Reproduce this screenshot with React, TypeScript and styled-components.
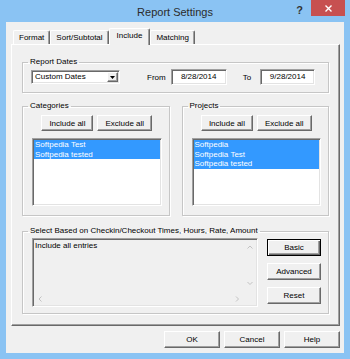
import React from 'react';
import styled, { createGlobalStyle, css } from 'styled-components';

const GlobalStyle = createGlobalStyle`
  html, body {
    margin: 0;
    padding: 0;
    background: #8ac3f3;
  }
  body {
    font-family: 'Liberation Sans', Arial, sans-serif;
  }
  * {
    box-sizing: border-box;
  }
`;

const raised = css`
  border: 1px solid;
  border-color: #ffffff #696969 #696969 #ffffff;
  box-shadow: inset -1px -1px 0 #a0a0a0;
`;

const sunken = css`
  border: 1px solid;
  border-color: #a0a0a0 #ffffff #ffffff #a0a0a0;
  box-shadow: inset 1px 1px 0 #696969, inset -1px -1px 0 #e3e3e3;
`;

const Window = styled.div`
  width: 350px;
  height: 359px;
  background: #8ac3f3;
  display: flex;
  flex-direction: column;
`;

const TitleBar = styled.div`
  height: 22px;
  display: grid;
  grid-template-columns: 1fr auto 1fr;
  align-items: start;
`;

const Title = styled.div`
  grid-column: 2;
  font-size: 11px;
  line-height: 22px;
  padding-top: 1px;
  color: #2b2b2b;
`;

const Controls = styled.div`
  grid-column: 3;
  justify-self: end;
  display: flex;
  align-items: flex-start;
`;

const HelpGlyph = styled.span`
  font-size: 11px;
  font-weight: bold;
  line-height: 20px;
  color: #333;
  margin-right: 8px;
`;

const CloseButton = styled.div`
  width: 34px;
  height: 16px;
  margin-right: 5px;
  background: #c75050;
  display: flex;
  align-items: center;
  justify-content: center;
`;

const Client = styled.div`
  flex: 1;
  margin: 0 6px 6px;
  background: #f0f0f0;
  padding: 6px 4px 5px 5px;
  display: flex;
  flex-direction: column;
  font-size: 8px;
  color: #000;
`;

const TabStrip = styled.div`
  display: flex;
  align-items: flex-end;
  height: 16px;
  padding-left: 2px;
`;

const Tab = styled.div<{ $active?: boolean }>`
  height: ${(p) => (p.$active ? 17 : 14)}px;
  margin-bottom: ${(p) => (p.$active ? -1 : 0)}px;
  padding: 0 ${(p) => (p.$active ? 7 : 5)}px;
  border: 1px solid;
  border-color: #ffffff #696969 transparent #ffffff;
  border-bottom: none;
  border-radius: 2px 2px 0 0;
  box-shadow: inset -1px 0 0 #a0a0a0;
  background: #f0f0f0;
  line-height: ${(p) => (p.$active ? 14 : 13)}px;
  white-space: nowrap;
  position: relative;
  z-index: ${(p) => (p.$active ? 1 : 0)};
`;

const TabPanel = styled.div`
  ${raised};
  background: #f0f0f0;
  padding: 12px 10px 11px;
  display: flex;
  flex-direction: column;
`;

const Group = styled.fieldset<{ $gap?: number }>`
  margin: ${(p) => p.$gap ?? 0}px 0 0;
  padding: 0;
  min-width: 0;
  border: 1px solid #c6c6c6;
  box-shadow: 1px 1px 0 #ffffff, inset 1px 1px 0 #ffffff;
`;

const Caption = styled.legend`
  margin-left: 5px;
  padding: 0 2px;
  font-size: 8px;
  line-height: 10px;
`;

const DatesRow = styled.div`
  display: flex;
  align-items: center;
  height: 16px;
  margin: 2px 8px 7px 8px;
`;

const Combo = styled.div`
  ${sunken};
  width: 89px;
  height: 14px;
  background: #fff;
  display: flex;
  padding: 1px;
`;

const ComboText = styled.div`
  flex: 1;
  padding-left: 2px;
  line-height: 10px;
`;

const DropButton = styled.div`
  ${raised};
  width: 11px;
  background: #f0f0f0;
  display: flex;
  align-items: center;
  justify-content: center;
`;

const FieldLabel = styled.span<{ $ml: number }>`
  margin-left: ${(p) => p.$ml}px;
`;

const DateBox = styled.div<{ $w: number; $ml: number }>`
  ${sunken};
  width: ${(p) => p.$w}px;
  height: 16px;
  margin-left: ${(p) => p.$ml}px;
  background: #fff;
  text-align: center;
  line-height: 14px;
`;

const Columns = styled.div`
  display: grid;
  grid-template-columns: 1fr 1fr;
  column-gap: 12px;
  margin-top: 8px;
`;

const GroupBody = styled.div`
  padding: 4px 7px 9px 9px;
`;

const ButtonRow = styled.div`
  display: flex;
  justify-content: center;
  gap: 4px;
`;

const PushButton = styled.button<{ $w?: number; $h?: number; $default?: boolean }>`
  ${raised};
  width: ${(p) => (p.$w ? `${p.$w}px` : 'auto')};
  height: ${(p) => p.$h ?? 16}px;
  padding: 0 ${(p) => (p.$w ? 0 : 7)}px;
  background: #f0f0f0;
  font: inherit;
  font-size: 8px;
  color: #000;
  cursor: default;
  ${(p) =>
    p.$default &&
    css`
      border: 1px solid #000;
      box-shadow: inset 1px 1px 0 #ffffff, inset -1px -1px 0 #696969,
        inset -2px -2px 0 #a0a0a0;
    `}
`;

const ListBox = styled.div`
  ${sunken};
  height: 68px;
  margin-top: 7px;
  background: #fff;
  padding: 1px;
`;

const ListItem = styled.div<{ $selected?: boolean }>`
  line-height: 9.5px;
  padding-left: 1px;
  white-space: nowrap;
  background: ${(p) => (p.$selected ? '#3399ff' : 'transparent')};
  color: ${(p) => (p.$selected ? '#fff' : '#000')};
`;

const CriteriaRow = styled.div`
  display: flex;
  margin: 2px 7px 6px 9px;
`;

const Criteria = styled.div`
  ${sunken};
  flex: 1;
  height: 69px;
  background: #f0f0f0;
  padding: 1px;
  display: grid;
  grid-template-columns: 1fr 12px;
  grid-template-rows: 1fr 12px;
`;

const CriteriaText = styled.div`
  padding: 1px 1px;
  line-height: 10px;
`;

const VScroll = styled.div`
  display: flex;
  flex-direction: column;
  justify-content: space-between;
  align-items: center;
  padding: 5px 0 7px;
`;

const HScroll = styled.div`
  display: flex;
  justify-content: space-between;
  align-items: center;
  padding: 0 4px 0 4px;
`;

const SideButtons = styled.div`
  display: flex;
  flex-direction: column;
  gap: 7px;
  margin-left: 9px;
  padding-top: 1px;
`;

const Footer = styled.div`
  display: flex;
  justify-content: flex-end;
  gap: 4px;
  margin-top: 5px;
`;

const Chevron: React.FC<{ dir: 'up' | 'down' | 'left' | 'right' }> = ({ dir }) => {
  const pts = {
    up: '0.5,3.5 3,1 5.5,3.5',
    down: '0.5,1 3,3.5 5.5,1',
    left: '3.5,0.5 1,3 3.5,5.5',
    right: '1,0.5 3.5,3 1,5.5',
  }[dir];
  const vertical = dir === 'up' || dir === 'down';
  return (
    <svg width={vertical ? 6 : 5} height={vertical ? 5 : 6}>
      <polyline points={pts} fill="none" stroke="#c2c2c2" strokeWidth="1" />
    </svg>
  );
};

const categories = ['Softpedia Test', 'Softpedia tested'];
const projects = ['Softpedia', 'Softpedia Test', 'Softpedia tested'];
const tabs = ['Format', 'Sort/Subtotal', 'Include', 'Matching'];

const PickList: React.FC<{ title: string; items: string[] }> = ({ title, items }) => (
  <Group>
    <Caption>{title}</Caption>
    <GroupBody>
      <ButtonRow>
        <PushButton>Include all</PushButton>
        <PushButton>Exclude all</PushButton>
      </ButtonRow>
      <ListBox>
        {items.map((item) => (
          <ListItem key={item} $selected>
            {item}
          </ListItem>
        ))}
      </ListBox>
    </GroupBody>
  </Group>
);

const App: React.FC = () => (
  <>
    <GlobalStyle />
    <Window>
      <TitleBar>
        <Title>Report Settings</Title>
        <Controls>
          <HelpGlyph>?</HelpGlyph>
          <CloseButton>
            <svg width="7" height="7">
              <path d="M0.5 0.5 L6.5 6.5 M6.5 0.5 L0.5 6.5" stroke="#fff" strokeWidth="1.4" />
            </svg>
          </CloseButton>
        </Controls>
      </TitleBar>
      <Client>
        <TabStrip>
          {tabs.map((t) => (
            <Tab key={t} $active={t === 'Include'}>
              {t}
            </Tab>
          ))}
        </TabStrip>
        <TabPanel>
          <Group>
            <Caption>Report Dates</Caption>
            <DatesRow>
              <Combo>
                <ComboText>Custom Dates</ComboText>
                <DropButton>
                  <svg width="5" height="3">
                    <polygon points="0,0 5,0 2.5,3" fill="#000" />
                  </svg>
                </DropButton>
              </Combo>
              <FieldLabel $ml={27}>From</FieldLabel>
              <DateBox $w={56} $ml={5}>
                8/28/2014
              </DateBox>
              <FieldLabel $ml={16}>To</FieldLabel>
              <DateBox $w={55} $ml={9}>
                9/28/2014
              </DateBox>
            </DatesRow>
          </Group>
          <Columns>
            <PickList title="Categories" items={categories} />
            <PickList title="Projects" items={projects} />
          </Columns>
          <Group $gap={10}>
            <Caption>Select Based on Checkin/Checkout Times, Hours, Rate, Amount</Caption>
            <CriteriaRow>
              <Criteria>
                <CriteriaText>Include all entries</CriteriaText>
                <VScroll>
                  <Chevron dir="up" />
                  <Chevron dir="down" />
                </VScroll>
                <HScroll>
                  <Chevron dir="left" />
                  <Chevron dir="right" />
                </HScroll>
              </Criteria>
              <SideButtons>
                <PushButton $w={54} $h={17} $default>
                  Basic
                </PushButton>
                <PushButton $w={54} $h={17}>
                  Advanced
                </PushButton>
                <PushButton $w={54} $h={17}>
                  Reset
                </PushButton>
              </SideButtons>
            </CriteriaRow>
          </Group>
        </TabPanel>
        <Footer>
          <PushButton $w={56} $h={17}>
            OK
          </PushButton>
          <PushButton $w={56} $h={17}>
            Cancel
          </PushButton>
          <PushButton $w={56} $h={17}>
            Help
          </PushButton>
        </Footer>
      </Client>
    </Window>
  </>
);

export default App;
